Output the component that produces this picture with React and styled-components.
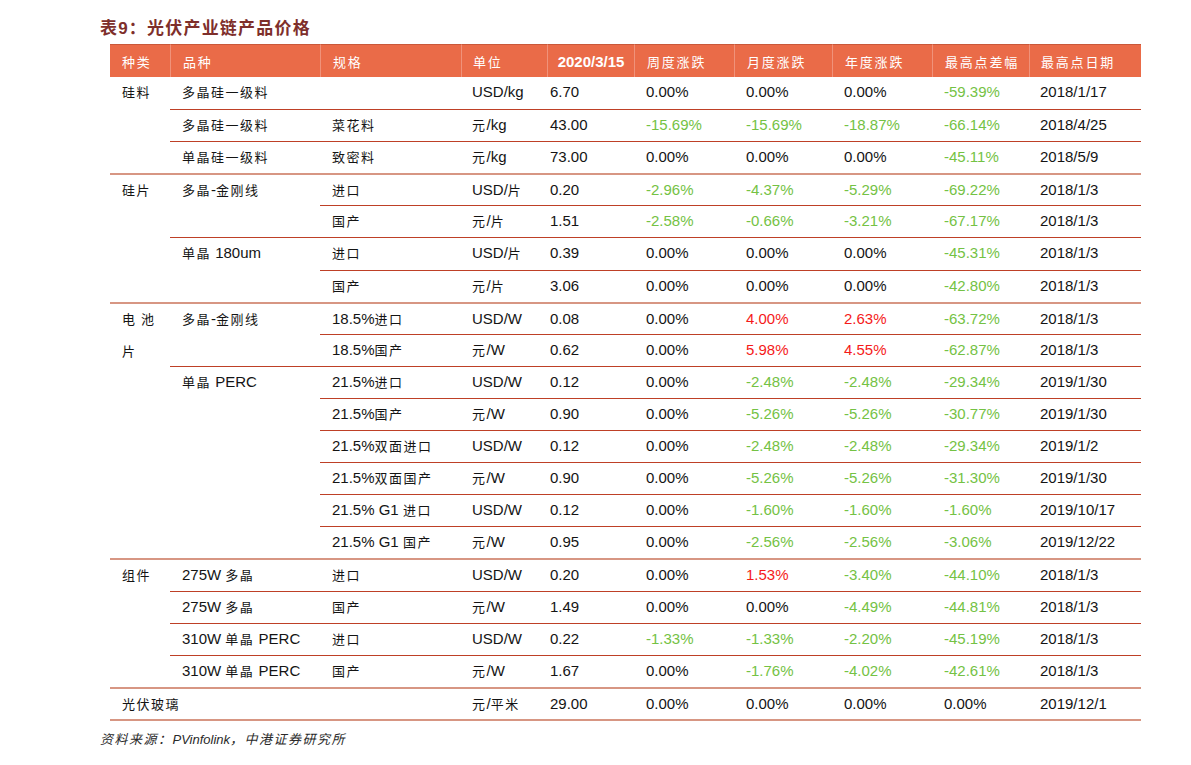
import React from 'react';
import styled, { createGlobalStyle } from 'styled-components';

const GlobalStyle = createGlobalStyle`
  * { box-sizing: border-box; }
  body {
    margin: 0;
    background: #FFFFFF;
    font-family: "Liberation Sans", "Noto Sans CJK SC", sans-serif;
  }
`;

const Page = styled.div`
  padding: 18px 0 0 100px;
  width: 1191px;
`;

const Title = styled.div`
  font-family: "Liberation Sans", "Noto Sans CJK SC", sans-serif;
  font-weight: 700;
  font-size: 17px;
  line-height: 22px;
  letter-spacing: 1.2px;
  color: #7E2F2B;
  margin-bottom: 4px;
`;

const Table = styled.table`
  margin-left: 10px;
  width: 1031px;
  table-layout: fixed;
  border-collapse: separate;
  border-spacing: 0;
  border-bottom: 2px solid #D79683;
  font-size: 15px;
  color: #141414;
`;

const HeadCell = styled.th`
  height: 33px;
  padding: 0 0 0 ${props => props.$pad ?? 12}px;
  background: #EA6B48;
  border-top: 1px solid #C9583A;
  border-left: ${props => props.$first ? 'none' : '1px solid #F0927A'};
  color: #FFFFFF;
  font-weight: ${props => props.$bold ? 700 : 400};
  font-size: ${props => props.$bold ? '15px' : '13px'};
  text-align: ${props => props.$center ? 'center' : 'left'};
  letter-spacing: ${props => props.$bold ? '0' : '1.8px'};
  vertical-align: middle;
`;

const borders = {
  group: '2px solid #D79683',
  inner: '1px solid #BE4026',
  none: 'none',
};

const Cell = styled.td`
  height: 32.1px;
  padding: 0 0 0 ${props => props.$pad ?? 12}px;
  border-top: ${props => borders[props.$line]};
  line-height: 30px;
  vertical-align: top;
  white-space: nowrap;
  color: ${props =>
    props.$tone === 'green' ? '#74C244' :
    props.$tone === 'red' ? '#F51A1A' : '#141414'};
`;

const Han = styled.span`
  font-family: "Noto Sans CJK SC", sans-serif;
  font-size: 13px;
  letter-spacing: 1.5px;
`;

const Spread = styled.span`
  font-family: "Noto Sans CJK SC", sans-serif;
  font-size: 13px;
  letter-spacing: 6px;
`;

const KindBox = styled.div`
  line-height: 32px;
  margin-top: -1px;
`;

const Caption = styled.div`
  margin-top: 8px;
  font-size: 13px;
  line-height: 20px;
  font-style: italic;
  color: #2A2A2A;
`;

const cjk = text => {
  if (!text) return null;
  return text.split(/([\u3000-\u303f\u4e00-\u9fff\uff00-\uffef]+)/).map((part, i) =>
    /[\u3000-\u303f\u4e00-\u9fff\uff00-\uffef]/.test(part)
      ? <Han key={i}>{part}</Han>
      : part
  );
};

const tone = v => {
  if (v.startsWith('-')) return 'green';
  if (v === '0.00%') return 'plain';
  return 'red';
};

// kind / variety cells: [text, rowspan], left out when covered by a rowspan above
const rows = [
  { line: 'none', kind: ['硅料', 3], variety: ['多晶硅一级料', 1], v: ['', 'USD/kg', '6.70', '0.00%', '0.00%', '0.00%', '-59.39%', '2018/1/17'] },
  { line: 'inner', variety: ['多晶硅一级料', 1], v: ['菜花料', '元/kg', '43.00', '-15.69%', '-15.69%', '-18.87%', '-66.14%', '2018/4/25'] },
  { line: 'inner', variety: ['单晶硅一级料', 1], v: ['致密料', '元/kg', '73.00', '0.00%', '0.00%', '0.00%', '-45.11%', '2018/5/9'] },

  { line: 'group', kind: ['硅片', 4], variety: ['多晶-金刚线', 2], v: ['进口', 'USD/片', '0.20', '-2.96%', '-4.37%', '-5.29%', '-69.22%', '2018/1/3'] },
  { line: 'inner', v: ['国产', '元/片', '1.51', '-2.58%', '-0.66%', '-3.21%', '-67.17%', '2018/1/3'] },
  { line: 'inner', variety: ['单晶 180um', 2], v: ['进口', 'USD/片', '0.39', '0.00%', '0.00%', '0.00%', '-45.31%', '2018/1/3'] },
  { line: 'inner', v: ['国产', '元/片', '3.06', '0.00%', '0.00%', '0.00%', '-42.80%', '2018/1/3'] },

  { line: 'group', kind: ['电池片', 8], variety: ['多晶-金刚线', 2], v: ['18.5%进口', 'USD/W', '0.08', '0.00%', '4.00%', '2.63%', '-63.72%', '2018/1/3'] },
  { line: 'inner', v: ['18.5%国产', '元/W', '0.62', '0.00%', '5.98%', '4.55%', '-62.87%', '2018/1/3'] },
  { line: 'inner', variety: ['单晶 PERC', 6], v: ['21.5%进口', 'USD/W', '0.12', '0.00%', '-2.48%', '-2.48%', '-29.34%', '2019/1/30'] },
  { line: 'inner', v: ['21.5%国产', '元/W', '0.90', '0.00%', '-5.26%', '-5.26%', '-30.77%', '2019/1/30'] },
  { line: 'inner', v: ['21.5%双面进口', 'USD/W', '0.12', '0.00%', '-2.48%', '-2.48%', '-29.34%', '2019/1/2'] },
  { line: 'inner', v: ['21.5%双面国产', '元/W', '0.90', '0.00%', '-5.26%', '-5.26%', '-31.30%', '2019/1/30'] },
  { line: 'inner', v: ['21.5% G1 进口', 'USD/W', '0.12', '0.00%', '-1.60%', '-1.60%', '-1.60%', '2019/10/17'] },
  { line: 'inner', v: ['21.5% G1 国产', '元/W', '0.95', '0.00%', '-2.56%', '-2.56%', '-3.06%', '2019/12/22'] },

  { line: 'group', kind: ['组件', 4], variety: ['275W 多晶', 1], v: ['进口', 'USD/W', '0.20', '0.00%', '1.53%', '-3.40%', '-44.10%', '2018/1/3'] },
  { line: 'inner', variety: ['275W 多晶', 1], v: ['国产', '元/W', '1.49', '0.00%', '0.00%', '-4.49%', '-44.81%', '2018/1/3'] },
  { line: 'inner', variety: ['310W 单晶 PERC', 1], v: ['进口', 'USD/W', '0.22', '-1.33%', '-1.33%', '-2.20%', '-45.19%', '2018/1/3'] },
  { line: 'inner', variety: ['310W 单晶 PERC', 1], v: ['国产', '元/W', '1.67', '0.00%', '-1.76%', '-4.02%', '-42.61%', '2018/1/3'] },
];

const widths = [60, 150, 141, 86, 87, 100, 98, 100, 97, 112];
const pads = [12, 12, 12, 11, 3, 12, 12, 12, 12, 11];
const heads = ['种类', '品种', '规格', '单位', '2020/3/15', '周度涨跌', '月度涨跌', '年度涨跌', '最高点差幅', '最高点日期'];

const KindText = ({ text }) =>
  text === '电池片'
    ? <KindBox><Spread>电池</Spread><br /><Han>片</Han></KindBox>
    : <Han>{text}</Han>;

const DataCells = ({ values, line }) => values.map((val, i) => {
  const col = i + 2;
  const isChange = col >= 5 && col <= 8;
  return (
    <Cell key={col} $line={line} $pad={pads[col]} $tone={isChange ? tone(val) : 'plain'}>
      {cjk(val)}
    </Cell>
  );
});

const App = () => (
  <>
    <GlobalStyle />
    <Page>
      <Title>表9：光伏产业链产品价格</Title>
      <Table>
        <colgroup>
          {widths.map((w, i) => <col key={i} style={{ width: w }} />)}
        </colgroup>
        <thead>
          <tr>
            {heads.map((h, i) => (
              <HeadCell
                key={h}
                $first={i === 0}
                $bold={i === 4}
                $center={i === 4}
                $pad={i === 4 ? 0 : pads[i]}
              >
                {h}
              </HeadCell>
            ))}
          </tr>
        </thead>
        <tbody>
          {rows.map((r, idx) => (
            <tr key={idx}>
              {r.kind && (
                <Cell $line={r.line} rowSpan={r.kind[1]}>
                  <KindText text={r.kind[0]} />
                </Cell>
              )}
              {r.variety && (
                <Cell $line={r.line} rowSpan={r.variety[1]}>
                  {cjk(r.variety[0])}
                </Cell>
              )}
              <DataCells values={r.v} line={r.line} />
            </tr>
          ))}
          <tr>
            <Cell $line="group" colSpan={2}><Han>光伏玻璃</Han></Cell>
            <DataCells values={['', '元/平米', '29.00', '0.00%', '0.00%', '0.00%', '0.00%', '2019/12/1']} line="group" />
          </tr>
        </tbody>
      </Table>
      <Caption>{cjk('资料来源：')}PVinfolink{cjk('，中港证券研究所')}</Caption>
    </Page>
  </>
);

export default App;
